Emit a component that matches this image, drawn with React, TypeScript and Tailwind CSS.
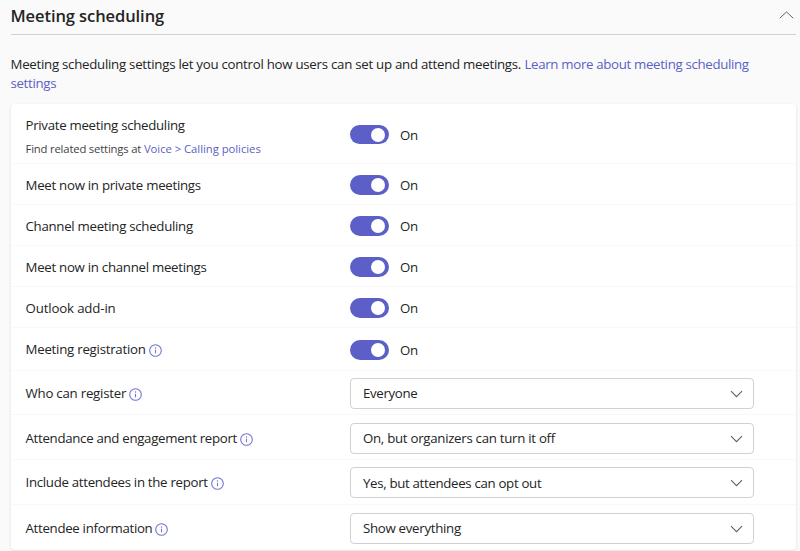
import React from "react";

type Row = {
  label: string;
  track: string;
  height: string;
  info?: boolean;
  note?: boolean;
  select?: string;
  selectTrack?: string;
};

const rows: Row[] = [
  { label: "Private meeting scheduling", track: "tracking-[-0.29px]", height: "h-[60px]", note: true },
  { label: "Meet now in private meetings", track: "tracking-[-0.275px]", height: "h-[41px]" },
  { label: "Channel meeting scheduling", track: "tracking-[-0.285px]", height: "h-[41px]" },
  { label: "Meet now in channel meetings", track: "tracking-[-0.28px]", height: "h-[41px]" },
  { label: "Outlook add-in", track: "tracking-[-0.15px]", height: "h-[41px]" },
  { label: "Meeting registration", track: "tracking-[-0.24px]", height: "h-[42.5px]", info: true },
  { label: "Who can register", track: "tracking-[-0.23px]", height: "h-[44.8px]", info: true, select: "Everyone", selectTrack: "tracking-[-0.34px]" },
  { label: "Attendance and engagement report", track: "tracking-[-0.3px]", height: "h-[44.8px]", info: true, select: "On, but organizers can turn it off", selectTrack: "tracking-[-0.28px]" },
  { label: "Include attendees in the report", track: "tracking-[-0.3px]", height: "h-[44.8px]", info: true, select: "Yes, but attendees can opt out", selectTrack: "tracking-[-0.32px]" },
  { label: "Attendee information", track: "tracking-[-0.3px]", height: "h-[45px]", info: true, select: "Show everything", selectTrack: "tracking-[-0.29px]" },
];

function InfoIcon() {
  return (
    <svg className="mt-[2px] ml-[3px] h-[13px] w-[13px] shrink-0" viewBox="0 0 13 13" fill="none">
      <circle cx="6.5" cy="6.5" r="5.8" stroke="#7276d2" strokeWidth="1.1" />
      <path d="M6.5 5.7v3.6" stroke="#7276d2" strokeWidth="1.1" />
      <circle cx="6.5" cy="3.9" r=".75" fill="#7276d2" />
    </svg>
  );
}

function Toggle() {
  return (
    <div className="flex items-center">
      <button className="flex h-[19.5px] w-[38.5px] items-center justify-end rounded-full bg-[#5b5fc7] pr-[3.5px]">
        <span className="h-[14px] w-[14px] rounded-full bg-white" />
      </button>
      <span className="mt-[1px] ml-[11.5px] tracking-[-0.2px]">On</span>
    </div>
  );
}

function Select({ text, track }: { text: string; track: string }) {
  return (
    <div className="flex h-[31px] w-[404px] items-center justify-between rounded-[4px] border border-[#d1d1d1] bg-white pr-[10.5px] pl-[12px]">
      <span className={`mt-[1px] ${track}`}>{text}</span>
      <svg className="mt-[1px] h-[8px] w-[13px]" viewBox="0 0 13 8" fill="none">
        <path d="M1 1.2l5.5 5.5L12 1.2" stroke="#616161" strokeWidth="1.1" />
      </svg>
    </div>
  );
}

export default function App() {
  return (
    <div className="h-[551px] w-[800px] overflow-hidden bg-[#fafafa] pr-[4px] pl-[10.5px] font-['Open_Sans','Noto_Sans',sans-serif] text-[13.25px] leading-[19px] text-[#242424]">
      <header className="flex h-[35px] items-center justify-between border-b border-[#d1d1d1] pr-[2px]">
        <h1 className="mb-[2px] text-[16.5px] leading-[22px] font-semibold tracking-[-0.08px]">Meeting scheduling</h1>
        <svg className="mb-[4px] h-[8px] w-[15px]" viewBox="0 0 15 8" fill="none">
          <path d="M.8 7.2L7.5.9l6.7 6.3" stroke="#616161" strokeWidth="1" />
        </svg>
      </header>
      <p className="pt-[20px]">
        <span className="tracking-[-0.26px]">Meeting scheduling settings let you control how users can set up and attend meetings.</span>{" "}
        <a className="tracking-[-0.32px] text-[#5b5fc7]">
          Learn more about meeting scheduling
          <br />
          settings
        </a>
      </p>
      <section className="mt-[11px] rounded-[4px] bg-white shadow-[0_1px_3px_rgba(0,0,0,0.12)]">
        {rows.map((r) => (
          <div key={r.label} className={`flex items-center border-b border-[#f8f8f8] pt-[2px] pl-[15px] last:border-b-0 ${r.height}`}>
            <div className="w-[324.5px] shrink-0">
              <div className={`flex items-center ${r.note ? "pt-[4px]" : ""}`}>
                <span className={r.track}>{r.label}</span>
                {r.info && <InfoIcon />}
              </div>
              {r.note && (
                <div className="mt-[4px] text-[11.3px] leading-[19px] tracking-[-0.185px] text-[#424242]">
                  Find related settings at <a className="tracking-[-0.04px] text-[#5b5fc7]">Voice &gt; Calling policies</a>
                </div>
              )}
            </div>
            {r.select ? <Select text={r.select} track={r.selectTrack ?? ""} /> : <Toggle />}
          </div>
        ))}
      </section>
    </div>
  );
}
